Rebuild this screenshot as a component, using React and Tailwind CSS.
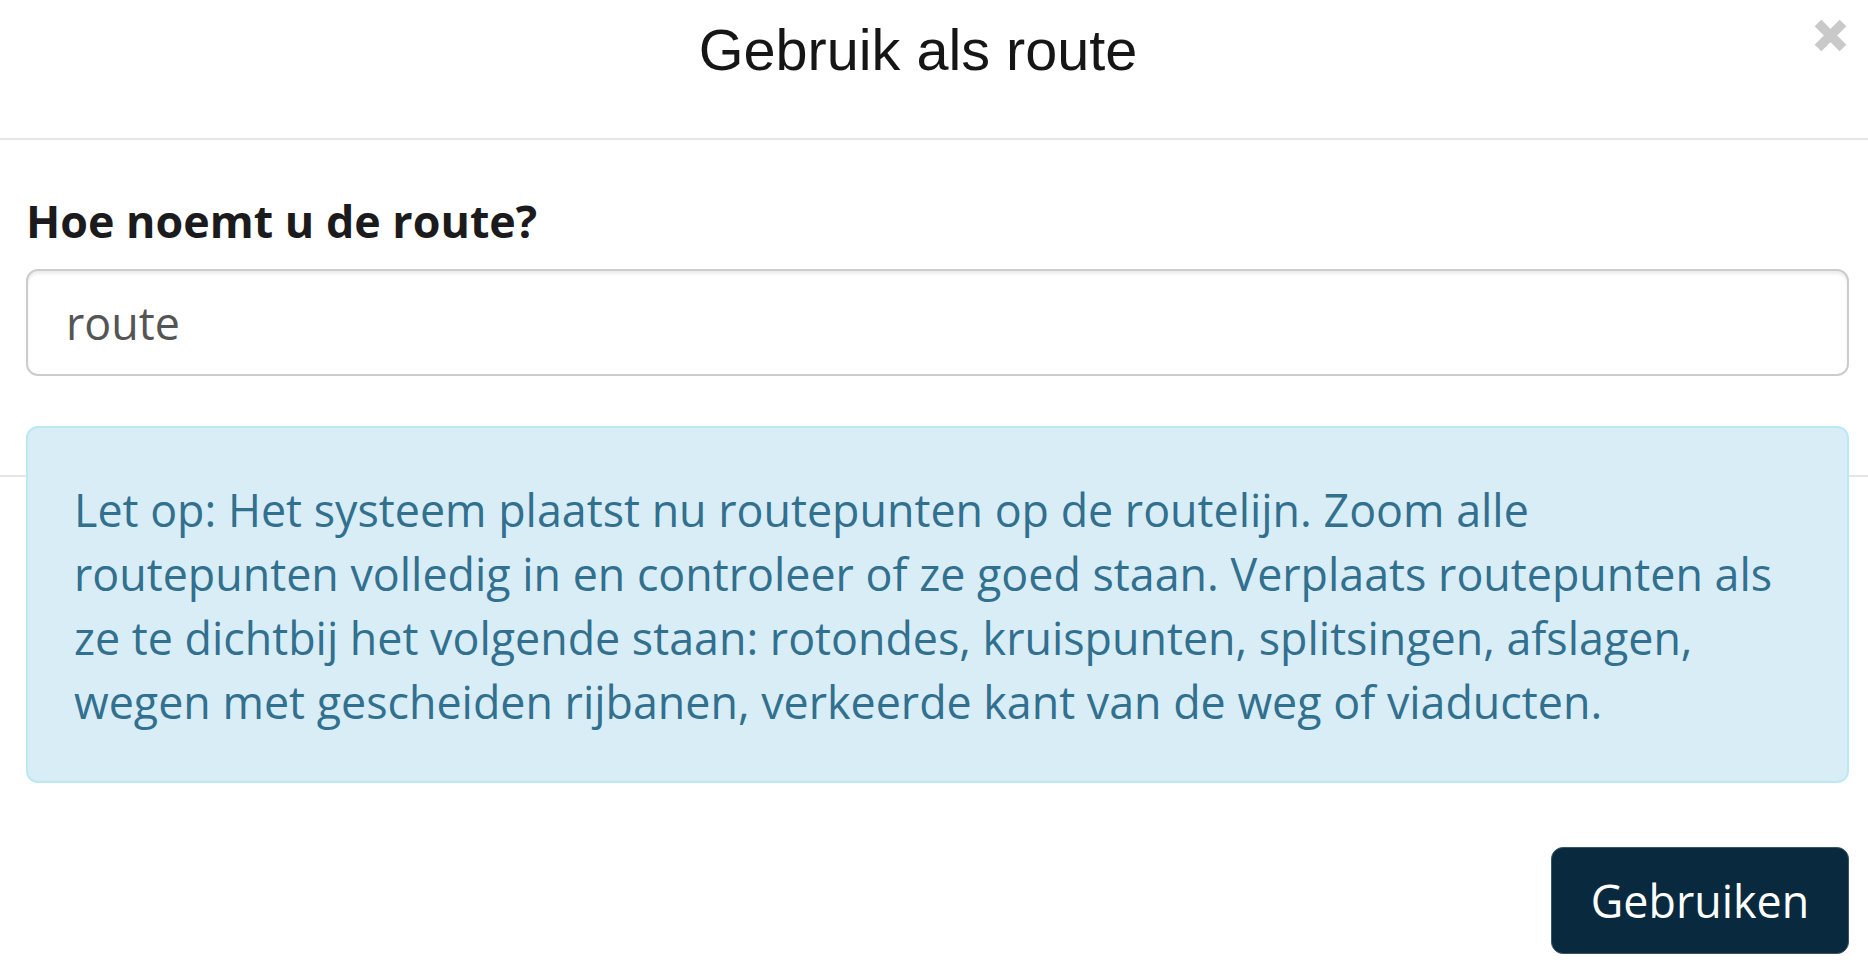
import React from "react";

export default function App() {
  return (
    <div className="min-h-screen w-full bg-white" style={{ fontFamily: '"Open Sans", "Noto Sans", sans-serif' }}>
      {/* Header */}
      <div className="flex items-start border-b-2 border-[#e5e5e5] pt-[9px] pb-[47px] pl-[48px]">
        <h4
          className="flex-1 text-center text-[57.6px] leading-[82px] font-normal text-[#161616]"
          style={{ fontFamily: '"Liberation Sans", Arial, sans-serif' }}
        >
          Gebruik als route
        </h4>
        <div className="flex w-[80px] justify-end pr-[21px] pt-[10px]">
          <button type="button" aria-label="Sluiten" className="block h-[33px] w-[33px]">
            <svg width="33" height="33" viewBox="0 0 33 33" className="block">
              <line x1="4" y1="4" x2="29" y2="29" stroke="#c9c9c9" strokeWidth="9.5" />
              <line x1="29" y1="4" x2="4" y2="29" stroke="#c9c9c9" strokeWidth="9.5" />
            </svg>
          </button>
        </div>
      </div>

      {/* Body */}
      <div className="pl-[26px] pr-[19px] pt-[49px] pb-[49px]">
        <div className="mb-[50px]">
          <label className="mb-[16px] block text-[44.8px] leading-[64px] font-bold text-[#1b1b1d]">
            Hoe noemt u de route?
          </label>
          <input
            type="text"
            defaultValue="route"
            className="block h-[107px] w-full rounded-[12px] border-2 border-[#cccccc] bg-white pl-[38px] pr-[35px] text-[44.8px] text-[#555555] shadow-[inset_0_3px_3px_rgba(0,0,0,0.075)] outline-none"
            style={{ fontFamily: '"Open Sans", "Noto Sans", sans-serif' }}
          />
        </div>
        <div className="float-left mb-[64px] w-full rounded-[12px] border-2 border-[#bce8f1] bg-[#d9edf7] pl-[46px] pr-[40px] pt-[50px] pb-[47px] text-[44.8px] leading-[64px] text-[#31708f]">
          Let op: Het systeem plaatst nu routepunten op de routelijn. Zoom alle
          <br />
          routepunten volledig in en controleer of ze goed staan. Verplaats routepunten als
          <br />
          ze te dichtbij het volgende staan: rotondes, kruispunten, splitsingen, afslagen,
          <br />
          wegen met gescheiden rijbanen, verkeerde kant van de weg of viaducten.
        </div>
      </div>

      {/* Footer */}
      <div className="border-t-2 border-[#e5e5e5] pl-[26px] pr-[19px] pt-[48px] pb-[48px]">
        <button
          type="button"
          className="float-right flex h-[107px] w-[298px] items-center justify-center rounded-[12px] border border-[#3a5466] bg-[#092a3e] text-[44.8px] leading-[64px] text-white"
          style={{ fontFamily: '"Open Sans", "Noto Sans", sans-serif' }}
        >
          Gebruiken
        </button>
        <div className="clear-both" />
      </div>
    </div>
  );
}
